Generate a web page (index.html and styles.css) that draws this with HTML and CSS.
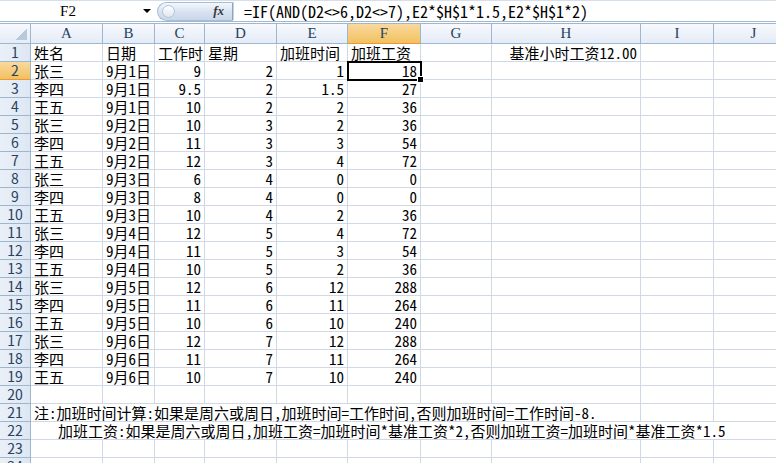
FILE: index.html
```html
<!DOCTYPE html>
<html lang="zh-CN">

<head>
    <meta charset="UTF-8">
    <title>加班工资</title>
    <link rel="stylesheet" href="styles.css">
</head>

<body>
    <!-- 名称框 + 编辑栏 -->
    <div class="toolbar">
        <div class="namebox">F2</div>
        <div class="dropdown"></div>
        <div class="pill"><span class="knob"></span><span class="fx">fx</span></div>
        <div class="formula">=IF(AND(D2&lt;&gt;6,D2&lt;&gt;7),E2*$H$1*1.5,E2*$H$1*2)</div>
    </div>

    <div class="sheet">
        <div class="row head">
            <div class="corner"></div>
            <div class="col">A</div><div class="col">B</div><div class="col">C</div><div class="col">D</div>
            <div class="col">E</div><div class="col col_on">F</div><div class="col">G</div><div class="col">H</div>
            <div class="col">I</div><div class="col">J</div>
        </div>
        <div class="row">
            <div class="rh">1</div>
            <div class="c">姓名</div><div class="c">日期</div><div class="c">工作时</div><div class="c">星期</div>
            <div class="c">加班时间</div><div class="c">加班工资</div><div class="c"></div>
            <div class="c num">基准小时工资12.00</div><div class="c"></div><div class="c"></div>
        </div>
        <div class="row">
            <div class="rh rh_on">2</div>
            <div class="c">张三</div><div class="c">9月1日</div><div class="c num">9</div><div class="c num">2</div>
            <div class="c num">1</div><div class="c num sel">18</div><div class="c"></div><div class="c"></div><div class="c"></div><div class="c"></div>
        </div>
        <div class="row">
            <div class="rh">3</div>
            <div class="c">李四</div><div class="c">9月1日</div><div class="c num">9.5</div><div class="c num">2</div>
            <div class="c num">1.5</div><div class="c num">27</div><div class="c"></div><div class="c"></div><div class="c"></div><div class="c"></div>
        </div>
        <div class="row">
            <div class="rh">4</div>
            <div class="c">王五</div><div class="c">9月1日</div><div class="c num">10</div><div class="c num">2</div>
            <div class="c num">2</div><div class="c num">36</div><div class="c"></div><div class="c"></div><div class="c"></div><div class="c"></div>
        </div>
        <div class="row">
            <div class="rh">5</div>
            <div class="c">张三</div><div class="c">9月2日</div><div class="c num">10</div><div class="c num">3</div>
            <div class="c num">2</div><div class="c num">36</div><div class="c"></div><div class="c"></div><div class="c"></div><div class="c"></div>
        </div>
        <div class="row">
            <div class="rh">6</div>
            <div class="c">李四</div><div class="c">9月2日</div><div class="c num">11</div><div class="c num">3</div>
            <div class="c num">3</div><div class="c num">54</div><div class="c"></div><div class="c"></div><div class="c"></div><div class="c"></div>
        </div>
        <div class="row">
            <div class="rh">7</div>
            <div class="c">王五</div><div class="c">9月2日</div><div class="c num">12</div><div class="c num">3</div>
            <div class="c num">4</div><div class="c num">72</div><div class="c"></div><div class="c"></div><div class="c"></div><div class="c"></div>
        </div>
        <div class="row">
            <div class="rh">8</div>
            <div class="c">张三</div><div class="c">9月3日</div><div class="c num">6</div><div class="c num">4</div>
            <div class="c num">0</div><div class="c num">0</div><div class="c"></div><div class="c"></div><div class="c"></div><div class="c"></div>
        </div>
        <div class="row">
            <div class="rh">9</div>
            <div class="c">李四</div><div class="c">9月3日</div><div class="c num">8</div><div class="c num">4</div>
            <div class="c num">0</div><div class="c num">0</div><div class="c"></div><div class="c"></div><div class="c"></div><div class="c"></div>
        </div>
        <div class="row">
            <div class="rh">10</div>
            <div class="c">王五</div><div class="c">9月3日</div><div class="c num">10</div><div class="c num">4</div>
            <div class="c num">2</div><div class="c num">36</div><div class="c"></div><div class="c"></div><div class="c"></div><div class="c"></div>
        </div>
        <div class="row">
            <div class="rh">11</div>
            <div class="c">张三</div><div class="c">9月4日</div><div class="c num">12</div><div class="c num">5</div>
            <div class="c num">4</div><div class="c num">72</div><div class="c"></div><div class="c"></div><div class="c"></div><div class="c"></div>
        </div>
        <div class="row">
            <div class="rh">12</div>
            <div class="c">李四</div><div class="c">9月4日</div><div class="c num">11</div><div class="c num">5</div>
            <div class="c num">3</div><div class="c num">54</div><div class="c"></div><div class="c"></div><div class="c"></div><div class="c"></div>
        </div>
        <div class="row">
            <div class="rh">13</div>
            <div class="c">王五</div><div class="c">9月4日</div><div class="c num">10</div><div class="c num">5</div>
            <div class="c num">2</div><div class="c num">36</div><div class="c"></div><div class="c"></div><div class="c"></div><div class="c"></div>
        </div>
        <div class="row">
            <div class="rh">14</div>
            <div class="c">张三</div><div class="c">9月5日</div><div class="c num">12</div><div class="c num">6</div>
            <div class="c num">12</div><div class="c num">288</div><div class="c"></div><div class="c"></div><div class="c"></div><div class="c"></div>
        </div>
        <div class="row">
            <div class="rh">15</div>
            <div class="c">李四</div><div class="c">9月5日</div><div class="c num">11</div><div class="c num">6</div>
            <div class="c num">11</div><div class="c num">264</div><div class="c"></div><div class="c"></div><div class="c"></div><div class="c"></div>
        </div>
        <div class="row">
            <div class="rh">16</div>
            <div class="c">王五</div><div class="c">9月5日</div><div class="c num">10</div><div class="c num">6</div>
            <div class="c num">10</div><div class="c num">240</div><div class="c"></div><div class="c"></div><div class="c"></div><div class="c"></div>
        </div>
        <div class="row">
            <div class="rh">17</div>
            <div class="c">张三</div><div class="c">9月6日</div><div class="c num">12</div><div class="c num">7</div>
            <div class="c num">12</div><div class="c num">288</div><div class="c"></div><div class="c"></div><div class="c"></div><div class="c"></div>
        </div>
        <div class="row">
            <div class="rh">18</div>
            <div class="c">李四</div><div class="c">9月6日</div><div class="c num">11</div><div class="c num">7</div>
            <div class="c num">11</div><div class="c num">264</div><div class="c"></div><div class="c"></div><div class="c"></div><div class="c"></div>
        </div>
        <div class="row">
            <div class="rh">19</div>
            <div class="c">王五</div><div class="c">9月6日</div><div class="c num">10</div><div class="c num">7</div>
            <div class="c num">10</div><div class="c num">240</div><div class="c"></div><div class="c"></div><div class="c"></div><div class="c"></div>
        </div>
        <div class="row">
            <div class="rh">20</div>
            <div class="c"></div><div class="c"></div><div class="c"></div><div class="c"></div><div class="c"></div>
            <div class="c"></div><div class="c"></div><div class="c"></div><div class="c"></div><div class="c"></div>
        </div>
        <div class="row">
            <div class="rh">21</div>
            <div class="c span_h">注:加班时间计算:如果是周六或周日,加班时间=工作时间,否则加班时间=工作时间-8.</div>
            <div class="c"></div><div class="c"></div>
        </div>
        <div class="row">
            <div class="rh">22</div>
            <div class="c span_j indent">加班工资:如果是周六或周日,加班工资=加班时间*基准工资*2,否则加班工资=加班时间*基准工资*1.5</div>
        </div>
        <div class="row">
            <div class="rh">23</div>
            <div class="c"></div><div class="c"></div><div class="c"></div><div class="c"></div><div class="c"></div>
            <div class="c"></div><div class="c"></div><div class="c"></div><div class="c"></div><div class="c"></div>
        </div>
        <div class="row">
            <div class="rh">24</div>
            <div class="c"></div><div class="c"></div><div class="c"></div><div class="c"></div><div class="c"></div>
            <div class="c"></div><div class="c"></div><div class="c"></div><div class="c"></div><div class="c"></div>
        </div>
    </div>
</body>

</html>
```

FILE: styles.css
```css
html,
body {
    margin: 0;
    padding: 0;
}

body {
    width: 776px;
    height: 463px;
    overflow: hidden;
    background-color: #fff;
    color: #000;
    font-family: "Noto Sans Mono CJK SC", "Noto Sans CJK SC", sans-serif;
    font-size: 15px;
}

/* 编辑栏 */
.toolbar {
    display: flex;
    align-items: center;
    height: 20px;
    border-top: 1px solid #d5dfeb;
    border-bottom: 1px solid #a3b7cf;
    background-color: #fff;
}

.namebox {
    width: 136px;
    text-align: center;
    font-family: "Liberation Serif", serif;
    font-size: 15px;
    line-height: 18px;
}

.dropdown {
    width: 0;
    height: 0;
    margin-left: 7px;
    border-left: 4px solid transparent;
    border-right: 4px solid transparent;
    border-top: 4px solid #000;
}

.pill {
    display: flex;
    align-items: center;
    justify-content: space-between;
    box-sizing: border-box;
    width: 76px;
    height: 19px;
    margin-left: 6px;
    padding: 0 8px 0 4px;
    border: 1px solid #a9bcd4;
    border-right-color: #8ea5c2;
    border-radius: 10px 0 0 10px;
    background: linear-gradient(#f3f7fc, #d6e2f0 55%, #c8d7ea);
}

.knob {
    width: 11px;
    height: 11px;
    border-radius: 50%;
    border: 1px solid #b3c3d6;
    background: linear-gradient(#ffffff, #dfe6ee);
}

.fx {
    font-family: "Liberation Serif", serif;
    font-style: italic;
    font-weight: bold;
    font-size: 13px;
    color: #3a3a3a;
}

.formula {
    flex: 1;
    padding-left: 10px;
    font-family: "Noto Sans Mono CJK SC", "Liberation Mono", monospace;
    font-size: 16px;
    line-height: 18px;
    border-left: 1px solid #c5d2e2;
    white-space: nowrap;
}

/* 表格 */
.sheet {
    margin-top: 1px;
}

.row {
    display: grid;
    grid-template-columns: 31px 72px 52px 50px 72px 71px 73px 71px 149px 73px 80px;
    height: 18px;
}

.head {
    height: 20px;
    border-top: 1px solid #9eb6ce;
}

.c,
.rh,
.col,
.corner {
    box-sizing: border-box;
    white-space: nowrap;
    line-height: 17px;
}

.c {
    padding: 0 3px;
    border-right: 1px solid #d0d7e5;
    border-bottom: 1px solid #d0d7e5;
}

.num {
    text-align: right;
}

.rh {
    text-align: center;
    color: #27415f;
    font-family: "Noto Sans CJK SC", sans-serif;
    font-size: 14px;
    background: linear-gradient(to right, #eaf0f8, #dde7f3);
    border-right: 1px solid #9eb6ce;
    border-bottom: 1px solid #9eb6ce;
}

.rh_on {
    background: linear-gradient(#f9d99f, #f1c15f);
    border-bottom-color: #f29536;
}

.col {
    text-align: center;
    line-height: 19px;
    color: #27415f;
    font-family: "Liberation Serif", serif;
    font-size: 15px;
    background: linear-gradient(#f7f9fd, #e4ecf7);
    border-right: 1px solid #9eb6ce;
    border-bottom: 1px solid #9eb6ce;
}

.col_on {
    background: linear-gradient(#f9d99f, #f1c15f);
    border-bottom-color: #f29536;
}

.corner {
    border-right: 1px solid #9eb6ce;
    border-bottom: 1px solid #9eb6ce;
    background:
        linear-gradient(to bottom right, transparent 50%, #b9c9dc 50%) no-repeat right 3px bottom 3px / 11px 11px,
        linear-gradient(#f7f9fd, #e4ecf7);
}

.sel {
    position: relative;
    outline: 2px solid #000;
    outline-offset: -1px;
    z-index: 1;
}

.sel::after {
    content: "";
    position: absolute;
    right: -4px;
    bottom: -4px;
    width: 5px;
    height: 5px;
    background-color: #000;
    border: 1px solid #fff;
}

.span_h {
    grid-column: span 8;
}

.span_j {
    grid-column: span 10;
}

.indent {
    padding-left: 27px;
}
```
